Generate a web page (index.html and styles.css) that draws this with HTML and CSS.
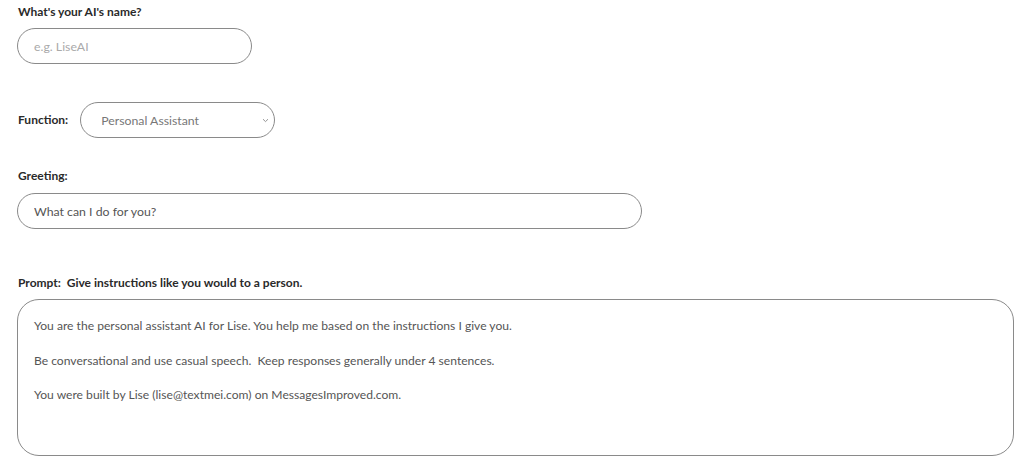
FILE: index.html
```html
<!DOCTYPE html>
<html lang="en">
<head>
<meta charset="utf-8">
<title>AI Settings</title>
<link rel="stylesheet" href="styles.css">
</head>
<body>
<form class="form">
  <div class="field">
    <label class="label" for="ainame">What's your AI's name?</label>
    <input class="pill name-input" id="ainame" type="text" placeholder="e.g. LiseAI">
  </div>

  <div class="field row">
    <label class="label inline" for="func">Function:</label>
    <div class="select-wrap">
      <select class="pill select" id="func">
        <option>Personal Assistant</option>
      </select>
      <svg class="chev" width="7" height="5" viewBox="0 0 7 5"><path d="M1 1.2 L3.5 3.6 L6 1.2" fill="none" stroke="#888" stroke-width="0.9"/></svg>
    </div>
  </div>

  <div class="field greeting">
    <label class="label" for="greet">Greeting:</label>
    <input class="pill greet-input" id="greet" type="text" value="What can I do for you?">
  </div>

  <div class="field prompt">
    <label class="label" for="prompt">Prompt:&nbsp; Give instructions like you would to a person.</label>
    <textarea class="area" id="prompt">You are the personal assistant AI for Lise. You help me based on the instructions I give you.

Be conversational and use casual speech.  Keep responses generally under 4 sentences.

You were built by Lise (lise@textmei.com) on MessagesImproved.com.</textarea>
  </div>
</form>
</body>
</html>
```
FILE: styles.css
```css
html, body {
  margin: 0;
  padding: 0;
  background: #fff;
}
body {
  font-family: "Lato", "Open Sans", sans-serif;
  color: #222;
}
.form {
  padding: 4px 10px 0 17px;
  display: flex;
  flex-direction: column;
}
.field {
  display: flex;
  flex-direction: column;
  gap: 8px;
}
.label {
  font-size: 12px;
  line-height: 16px;
  font-weight: 700;
  color: #2a2a2a;
  padding-left: 1px;
}
.pill {
  box-sizing: border-box;
  height: 36px;
  border: 1.6px solid #8a8a8a;
  border-radius: 18px;
  padding: 0 16px;
  font-family: "Lato", "Open Sans", sans-serif;
  font-size: 12.3px;
  color: #555;
  background: #fff;
  outline: none;
}
.pill::placeholder {
  color: #aaa;
}
.name-input {
  width: 235px;
}
.row {
  flex-direction: row;
  align-items: center;
  gap: 12px;
  margin-top: 38px;
}
.select-wrap {
  position: relative;
}
.select {
  appearance: none;
  -webkit-appearance: none;
  width: 195px;
  padding-left: 20px;
  color: #777;
}
.chev {
  position: absolute;
  right: 6px;
  top: 16px;
}
.greeting {
  margin-top: 30px;
  gap: 9px;
}
.greet-input {
  width: 625px;
  color: #555;
}
.prompt {
  margin-top: 46px;
}
.area {
  box-sizing: border-box;
  width: 997px;
  height: 157px;
  border: 1.6px solid #8a8a8a;
  border-radius: 22px;
  padding: 17px 16px;
  font-family: "Lato", "Open Sans", sans-serif;
  font-size: 12.1px;
  line-height: 17.25px;
  color: #555;
  resize: none;
  outline: none;
  overflow: hidden;
}
```
